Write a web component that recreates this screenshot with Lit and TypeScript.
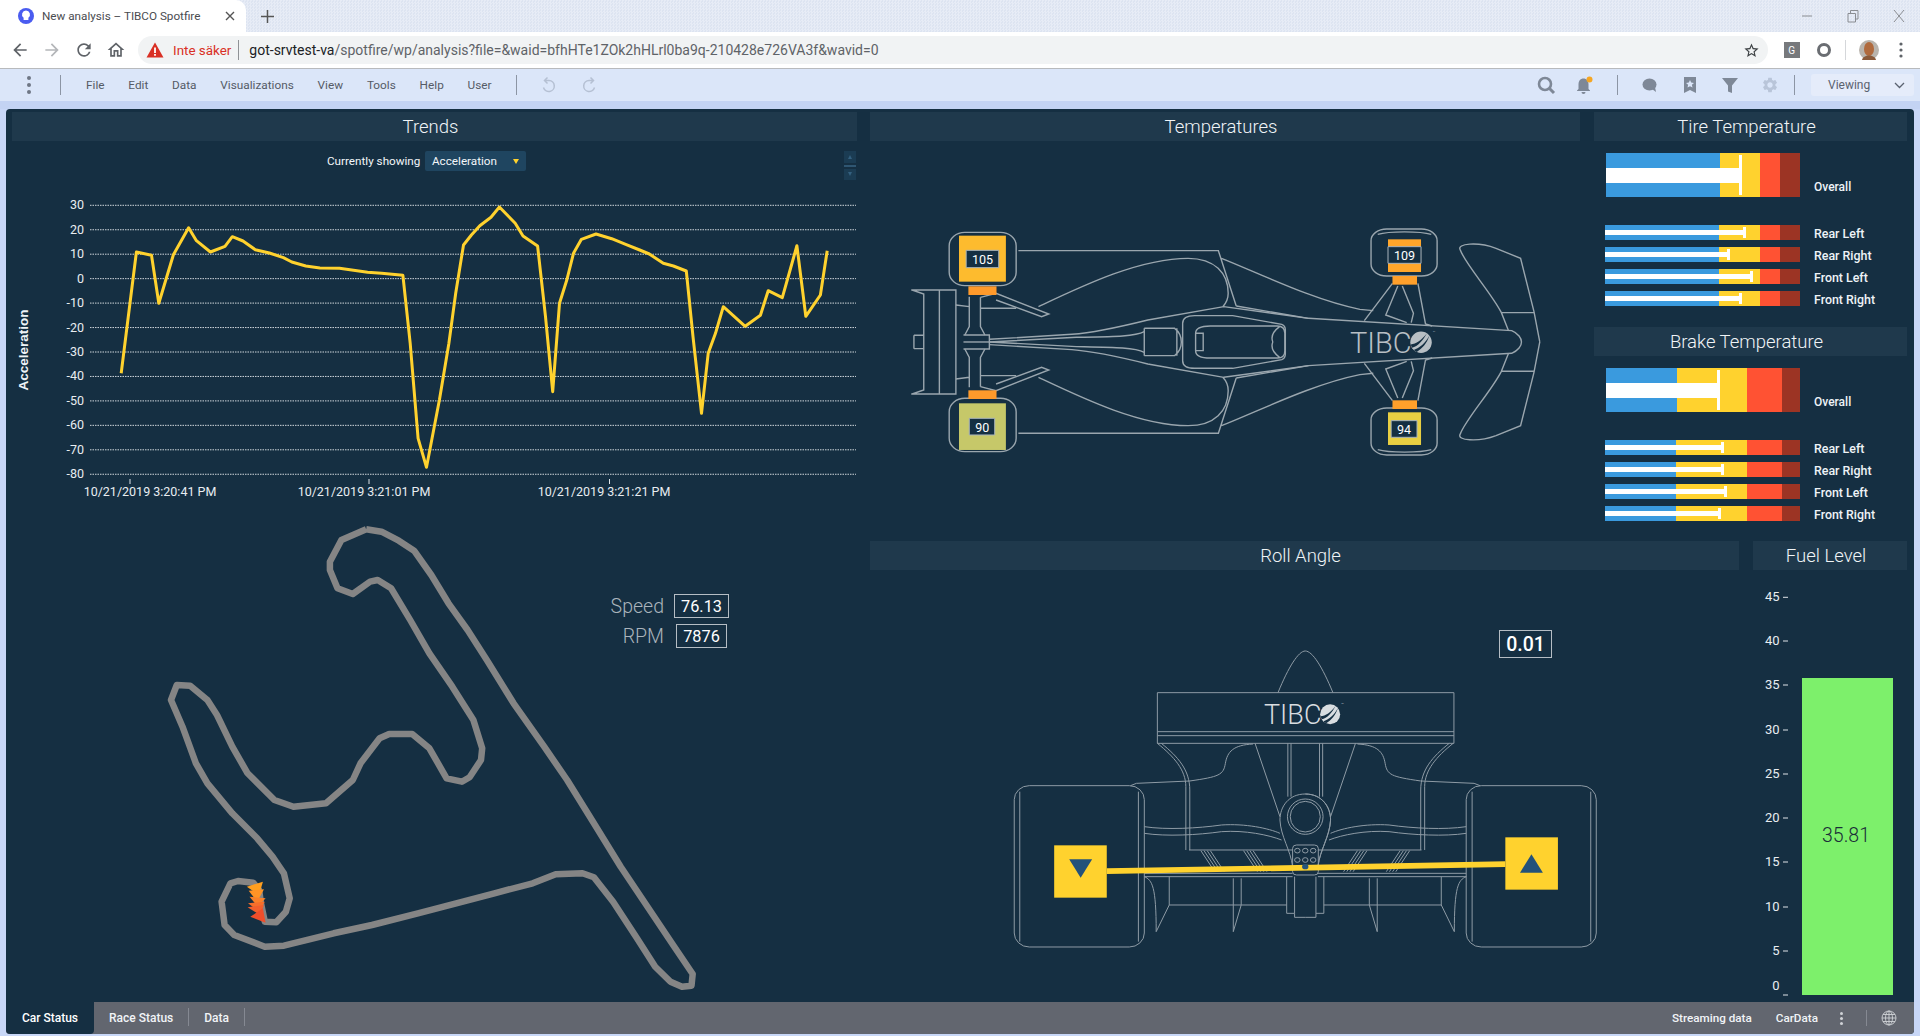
import { LitElement, html, css, svg } from "lit";
import { customElement } from "lit/decorators.js";

type Seg = [number, string];
const C = { blue: "#3a9ade", yellow: "#ffd22e", red: "#ff5233", dark: "#9c3424" };

const TICKS_Y = [30, 20, 10, 0, -10, -20, -30, -40, -50, -60, -70, -80];
const LINE_Z: [number, number][] = [[216,790],[243,426],[270,436],[283,580],[309,434],[336,353],[350,392],[375,426],[401,409],[414,380],[433,393],[455,419],[480,429],[505,443],[520,456],[545,468],[570,474],[605,475],[630,481],[655,487],[680,490],[718,496],[731,700],[745,985],[760,1072],[783,870],[800,700],[812,550],[826,405],[840,375],[855,347],[875,322],[890,291],[918,340],[932,378],[958,408],[972,620],[985,845],[997,580],[1010,510],[1022,430],[1036,388],[1062,372],[1090,386],[1115,403],[1140,420],[1157,432],[1182,460],[1200,468],[1223,483],[1235,680],[1250,910],[1262,730],[1275,670],[1289,590],[1328,649],[1355,616],[1369,542],[1394,563],[1408,480],[1420,407],[1436,619],[1462,555],[1474,422]];
const TRACK_Z: [number, number][] = [[565,28],[605,35],[650,62],[690,92],[735,165],[780,250],[830,330],[880,420],[950,550],[1030,680],[1090,780],[1160,910],[1230,1040],[1300,1160],[1370,1280],[1418,1362],[1415,1397],[1390,1400],[1360,1385],[1320,1340],[1270,1250],[1210,1145],[1160,1072],[1130,1060],[1060,1063],[1000,1090],[900,1120],[800,1150],[700,1180],[580,1215],[480,1240],[350,1277],[300,1280],[220,1245],[195,1215],[187,1145],[210,1090],[230,1083],[270,1088],[285,1110],[290,1150],[300,1205],[330,1207],[355,1175],[365,1135],[350,1060],[320,1010],[280,955],[215,880],[150,790],[120,730],[85,620],[55,540],[70,495],[105,497],[150,540],[175,585],[215,680],[255,760],[325,840],[375,860],[460,850],[530,780],[550,730],[600,655],[625,642],[685,642],[730,685],[775,775],[815,785],[835,772],[865,720],[868,685],[845,600],[790,500],[730,400],[680,300],[630,205],[595,180],[575,185],[530,222],[490,205],[470,150],[470,125],[500,60],[565,28]];

const pts = (a: [number, number][], ox: number, oy: number, sx: number, sy: number) =>
  a.map(([x, y]) => `${(ox + x / sx).toFixed(1)},${(oy + y / sy).toFixed(1)}`).join(" ");

const logo = (x: number, y: number, size: number, color: string, bg: string) => {
  const r = size * 0.37;
  const cx = x + size * 2.45;
  const cy = y - size * 0.36;
  return svg`
  <text x=${x} y=${y} class="tibco" style="font-size:${size}px" fill=${color}>TIBC</text>
  <text x=${cx + r + 1} y=${cy - r + 2} class="tibco" style="font-size:4px" fill=${color}>™</text>
  <g transform="translate(${cx},${cy}) scale(${r})">
    <circle r="1" fill=${color}></circle>
    <path d="M-0.96 0.2 C-0.45 0.15 0.05 -0.2 0.55 -0.84 C0.2 -0.2 -0.3 0.4 -0.85 0.5 Z" fill=${bg}></path>
    <path d="M-0.68 0.72 C-0.15 0.55 0.4 0.1 0.78 -0.62 C0.55 0.1 0.1 0.62 -0.4 0.9 Z" fill=${bg}></path>
  </g>`;
};

const topHalf = svg`
  <path d="M70,270 H170 V426 M72,270 L98,282 V426 M133,270 V426 M76,406 H98 M76,406 V426"></path>
  <rect x="155" y="97" width="150" height="160" rx="35" ry="40"></rect>
  <path d="M170,315 L200,320 M200,290 V380 L190,405 M225,292 V380 L235,405 M225,325 H305"></path>
  <path d="M187,405 H245 V426"></path>
  <path d="M245,418 L430,403 C480,398 540,380 600,360 L770,320 L960,355 L1415,392 C1430,400 1437,415 1437,426"></path>
  <path d="M245,426 L440,412 C520,410 570,410 592,395"></path>
  <path d="M592,385 H660 C670,395 675,410 675,426 M592,385 V426 M665,385 V426"></path>
  <path d="M678,426 V370 C678,352 690,347 705,347 H790 L900,373 C906,376 908,382 908,390 V426"></path>
  <path d="M707,426 V400 C707,386 720,378 740,378 H890 C902,378 907,385 907,400 V426 M707,400 H724 V426 M880,426 C875,410 880,395 895,380"></path>
  <path d="M355,320 C450,260 580,175 690,175 C750,175 780,220 780,280 C780,300 775,310 768,320"></path>
  <path d="M310,152 H758 L798,318 M765,175 C850,220 970,300 1075,328 L1105,332"></path>
  <path d="M798,318 L960,355"></path>
  <path d="M225,292 L260,280 L378,342 L362,350 L260,300"></path>
  <rect x="1100" y="87" width="148" height="141" rx="35" ry="35"></rect>
  <path d="M1115,103 C1140,93 1210,93 1235,103"></path>
  <path d="M1148,250 L1085,362 M1160,258 L1133,345 L1180,368 M1170,258 L1195,340 L1190,368 M1205,250 L1222,372 L1237,378"></path>
  <path d="M1300,150 C1290,130 1340,125 1380,145 L1435,175 L1465,335 L1478,426 M1300,150 C1310,190 1370,280 1392,338 L1408,392 M1392,338 H1465"></path>`;

const rearHalf = svg`
  <rect x="36" y="497" width="329" height="484" rx="38" ry="42"></rect>
  <path d="M50,515 V965 M350,515 V965"></path>
  <path d="M398,370 C440,410 470,450 470,500 V690 M408,370 C450,410 480,450 480,510 V690"></path>
  <path d="M640,372 C590,375 575,395 570,430 C565,465 555,470 480,483 L345,490 L330,497"></path>
  <path d="M645,370 L708,590 M728,370 V530 M736,370 V530"></path>
  <path d="M772,522 C730,522 708,560 708,600 C710,650 735,690 740,740"></path>
  <path d="M365,620 C420,630 500,625 560,615 C620,610 680,625 708,640 M365,640 C420,650 500,645 560,635 C620,630 680,645 712,660"></path>
  <path d="M478,690 H740 M365,760 H740 M365,770 H740"></path>
  <path d="M508,692 L543,755 M516,692 L551,755 M524,692 L559,755 M532,692 L567,755 M616,692 L651,755 M624,692 L659,755 M632,692 L667,755 M640,692 L675,755"></path>
  <path d="M365,770 C385,780 395,800 395,935 L428,855 V770 M590,775 V935 L610,855 V775 M428,855 H610 M610,855 H725"></path>
  <path d="M725,770 V880 H745 V892 H772 M745,770 V880"></path>`;

const carTemp = (x: number, y: number, w: number, h: number, fill: string, bx: number, by: number, bw: number, bh: number) => svg`
  <rect x=${x} y=${y} width=${w} height=${h} fill=${fill}></rect>
  <rect x=${bx} y=${by} width=${bw} height=${bh} fill="#152f42" stroke="#a9b5bd" vector-effect="non-scaling-stroke"></rect>`;

const TOP_LABELS: [number, number, string][] = [[229.5,177,"105"],[1175,165,"109"],[229,681,"90"],[1174,687,"94"]];

@customElement("bullet-row")
class BulletRow extends LitElement {
  static properties = { segs: { type: Array }, value: { type: Number }, big: { type: Boolean }, label: { type: String } };
  segs: Seg[] = []; value = 0; big = false; label = "";
  static styles = css`
    :host { display: grid; grid-template-columns: 195px 1fr; column-gap: 13px; font-family: Roboto, "Liberation Sans", sans-serif; }
    .bar { position: relative; display: flex; height: 15px; }
    .bar.big { height: 44px; margin-left: 1px; width: 194px; }
    .seg { height: 100%; }
    .fill { position: absolute; left: 0; top: 5px; height: 5px; background: #fff; }
    .mark { position: absolute; top: 2px; height: 11px; width: 3px; background: #fff; }
    .bar.big .fill { top: 15px; height: 15px; }
    .bar.big .mark { top: 2px; height: 40px; }
    .lab { font-size: 12.4px; font-weight: 500; color: #eef3f7; height: 15px; line-height: 18px; margin-left: 1px; white-space: nowrap; }
    .lab.big { height: auto; padding-top: 27px; line-height: 14px; font-size: 12px; }
  `;
  render() {
    return html`
      <div class="bar ${this.big ? "big" : ""}">
        ${this.segs.map(([w, c]) => html`<div class="seg" style="width:${w}px;background:${c}"></div>`)}
        <div class="fill" style="width:${this.value}px"></div>
        <div class="mark" style="left:${this.value}px"></div>
      </div>
      <div class="lab ${this.big ? "big" : ""}">${this.label}</div>`;
  }
}

@customElement("app-root")
class AppRoot extends LitElement {
  static styles = css`
    :host { display: block; width: 1920px; height: 1036px; background: #c8d7f7; overflow: hidden; font-family: Roboto, "Liberation Sans", sans-serif; }
    .tabstrip { height: 32px; background: repeating-conic-gradient(#e7ecf6 0 25%, #dde4f1 0 50%) 0 0 / 3px 3px; display: flex; align-items: center; position: relative; }
    .tab { width: 246px; height: 32px; background: #fff; border-radius: 0 10px 0 0; display: flex; align-items: center; box-sizing: border-box; padding-left: 18px; color: #4a4c50; font-size: 11.7px; flex: none; }
    .tab .fav { margin-right: 8px; flex: none; }
    .tab .t { flex: 1; white-space: nowrap; }
    .tab .x { margin-right: 11px; flex: none; }
    .plus { margin-left: 15px; }
    .win { margin-left: auto; display: flex; align-items: center; gap: 34px; padding-right: 15px; }
    .addr { height: 36px; background: #fff; display: flex; align-items: center; border-bottom: 1px solid #b8babd; position: relative; }
    .nav { display: flex; align-items: center; gap: 12px; padding-left: 10px; width: 138px; box-sizing: border-box; flex: none; }
    .omni { width: 1630px; height: 28px; background: #f1f3f4; border-radius: 14px; display: flex; align-items: center; flex: none; box-sizing: border-box; padding-left: 8px; padding-right: 8px; }
    .warn { margin-right: 9px; flex: none; }
    .insec { color: #d93025; font-size: 13.4px; white-space: nowrap; }
    .osep { width: 1px; height: 20px; background: #8f9296; margin: 0 10px 0 7px; }
    .url { color: #5f6368; white-space: nowrap; font-size: 14px; }
    .url b { font-weight: 400; color: #202124; }
    .star { margin-left: auto; display: flex; }
    .ext { display: flex; align-items: center; margin-left: 15.6px; }
    .g { width: 16px; height: 16px; background: #77797c; color: #fff; font-size: 10px; display: flex; align-items: center; justify-content: center; }
    .q { margin-left: 16px; }
    .esep { width: 1px; height: 20px; background: #d5d7da; margin-left: 13.5px; }
    .ava { margin-left: 13px; }
    .edots { margin-left: 20px; }

    .tools { height: 32px; background: #dbe6f9; display: flex; align-items: center; color: #555b66; font-size: 11.8px; position: relative; }
    .dots { width: 4px; margin-left: 27px; margin-right: 29px; display: flex; flex-direction: column; gap: 3px; }
    .dots i { width: 4px; height: 4px; background: #6e7785; border-radius: 50%; }
    .vsep { width: 1px; height: 20px; background: #8c95a4; flex: none; }
    .menu { display: flex; gap: 23.8px; margin-left: 25px; margin-right: 24px; }
    .undo { margin-left: 24px; }
    .redo { margin-left: 24px; }
    .right { margin-left: auto; display: flex; align-items: center; }
    .viewing { width: 103px; height: 22px; background: #e5ecfa; border-radius: 3px; display: flex; align-items: center; box-sizing: border-box; padding-left: 17px; margin-left: 16px; margin-right: 6px; font-size: 12px; color: #5a6270; }
    .viewing svg { margin-left: auto; margin-right: 9px; }
    .band { height: 8px; background: #c3d3f3; }

    .panel { margin: 0 6px; height: 925px; background: #152f42; border-radius: 4px; display: flex; flex-direction: column; overflow: hidden; }
    .main { flex: 1; min-height: 0; display: grid; grid-template-columns: 845px 1037px; column-gap: 13px; padding: 3px 7px 0 6px; }
    .col { display: flex; flex-direction: column; min-width: 0; }
    .title { height: 29px; box-sizing: border-box; padding-right: 8px; background: #1f394c; color: #f0f4f7; font-size: 18.5px; font-weight: 300; display: flex; align-items: center; justify-content: center; flex: none; }
    .chartcell { position: relative; height: 369px; }
    .chartcell svg, .trackcell svg, .car svg, .fuel svg { display: block; }
    .filter { position: absolute; left: 315px; top: 10px; display: flex; align-items: center; gap: 4px; color: #f3f6f9; font-size: 11.7px; }
    .filter .lbl { width: 94px; white-space: nowrap; }
    .dd { width: 101px; height: 20px; background: #1f4560; border-radius: 2px; display: flex; align-items: center; box-sizing: border-box; padding-left: 7px; position: relative; }
    .dd i { position: absolute; left: 88px; top: 8px; width: 0; height: 0; border-left: 3.5px solid transparent; border-right: 3.5px solid transparent; border-top: 5px solid #ffd22e; }
    .scroller { position: absolute; left: 832px; top: 10px; width: 12px; height: 29px; display: flex; flex-direction: column; gap: 2px; }
    .scroller .b { flex: 1; background: #1b3c53; display: flex; align-items: center; justify-content: center; }
    .scroller .m { height: 2px; background: #2f5672; flex: none; }
    .scroller .up { width: 0; height: 0; border-left: 2.5px solid transparent; border-right: 2.5px solid transparent; border-bottom: 4px solid #34607f; }
    .scroller .dn { width: 0; height: 0; border-left: 2.5px solid transparent; border-right: 2.5px solid transparent; border-top: 4px solid #34607f; }
    .trackcell { position: relative; height: 492px; }
    .readouts { position: absolute; left: 590px; top: 84px; display: grid; grid-template-columns: 62px auto; row-gap: 6px; column-gap: 10px; align-items: center; justify-items: center; }
    .rl { justify-self: end; color: #aab4bc; font-size: 19.5px; font-weight: 300; padding-top: 1px; }
    .rv { height: 24px; box-sizing: border-box; border: 1px solid #b5bdc4; color: #fff; font-size: 16.3px; display: flex; align-items: center; justify-content: center; }
    .rv.a { width: 55px; }
    .rv.b { width: 51px; }

    .toprow { display: grid; grid-template-columns: 710px 313px; column-gap: 14px; height: 429px; }
    .botrow { display: grid; grid-template-columns: 869px 154px; column-gap: 14px; height: 461px; }
    .side { display: flex; flex-direction: column; }
    .rows { display: flex; flex-direction: column; gap: 7px; margin-left: 11px; }
    .ov { margin: 12px 0 28px 11px; }
    .brake { margin-top: 21px; }
    .car { position: relative; }
    .rollval { position: absolute; left: 629px; top: 60px; width: 53px; height: 28px; box-sizing: border-box; border: 1px solid #b5bdc4; color: #fff; font-size: 19.5px; font-weight: 500; display: flex; align-items: center; justify-content: center; }

    .status { height: 32px; flex: none; background: #62666f; display: flex; align-items: stretch; font-size: 12px; font-weight: 500; color: #f1f4f7; }
    .stab { display: flex; align-items: center; padding: 0 16px 0 15px; white-space: nowrap; }
    .stab.on { width: 88px; box-sizing: border-box; padding: 0; background: #152f42; justify-content: center; border-radius: 0 0 4px 4px; color: #fff; }
    .stab.s { position: relative; }
    .stab.s::after { content: ""; position: absolute; right: 0; top: 6px; height: 18px; width: 1px; background: #858992; }
    .sright { margin-left: auto; display: flex; align-items: center; padding-right: 17px; white-space: nowrap; }
    .sright .txt { font-size: 11.7px; }
    .sdots { display: flex; flex-direction: column; gap: 2px; margin-left: 22px; margin-right: 23px; }
    .sdots i { width: 3px; height: 3px; border-radius: 50%; background: #cfd2d6; }
    .ssep { width: 1px; height: 16px; background: #858992; margin-right: 14px; }
    .sgap { margin-left: 24px; }

    .axis { font-family: Roboto, "Liberation Sans", sans-serif; font-size: 12.5px; fill: #e8edf1; }
    .faxis { font-family: Roboto, "Liberation Sans", sans-serif; font-size: 13px; fill: #e8edf1; }
    .ylab { font-family: "Liberation Sans", Arial, sans-serif; font-size: 13.5px; font-weight: 700; fill: #eef3f7; }
    .lines path, .lines rect, .lines ellipse, .lines circle { fill: none; vector-effect: non-scaling-stroke; stroke: #8e9ba5; stroke-width: 1; }
    .lines.heavy path, .lines.heavy rect { stroke: #9aa6ae; stroke-width: 1.4; }
    .tibco { font-family: Roboto, "Liberation Sans", sans-serif; font-weight: 300; }
    .tv { font-family: Roboto, "Liberation Sans", sans-serif; font-size: 12.5px; fill: #fff; text-anchor: middle; }
    .fuelv { font-family: Roboto, "Liberation Sans", sans-serif; font-size: 19.5px; font-weight: 300; fill: #1a2d38; text-anchor: middle; }
  `;

  private icon(path: string, size: number, color: string) {
    return html`<svg width=${size} height=${size} viewBox="0 0 24 24"><path d=${path} fill=${color}></path></svg>`;
  }

  private chromeBar() {
    return html`
      <div class="tabstrip">
        <div class="tab">
          <svg class="fav" width="16" height="18" viewBox="0 0 16 18"><circle cx="8" cy="9" r="8" fill="#4a5cf0"></circle><path d="M8 3.5a4 4 0 0 1 2.4 7.2V13H5.6v-2.3A4 4 0 0 1 8 3.5z" fill="#fff"></path></svg>
          <span class="t">New analysis – TIBCO Spotfire</span>
          <svg class="x" width="10" height="10" viewBox="0 0 10 10"><path d="M1 1l8 8M9 1l-8 8" stroke="#555" stroke-width="1.4"></path></svg>
        </div>
        <svg class="plus" width="13" height="13" viewBox="0 0 13 13"><path d="M6.5 0v13M0 6.5h13" stroke="#555" stroke-width="1.5"></path></svg>
        <div class="win">
          <svg width="12" height="12" viewBox="0 0 12 12"><path d="M1 6h10" stroke="#8a8d92"></path></svg>
          <svg width="12" height="14" viewBox="0 0 12 14"><path d="M1 4.5h7.5V13H1zM3.5 4.5V1.5H11V10H8.5" fill="none" stroke="#8a8d92"></path></svg>
          <svg width="12" height="14" viewBox="0 0 12 14"><path d="M1 1l10 12M11 1L1 13" stroke="#8a8d92"></path></svg>
        </div>
      </div>
      <div class="addr">
        <div class="nav">
          ${this.icon("M20 11H7.83l5.59-5.59L12 4l-8 8 8 8 1.41-1.41L7.83 13H20v-2z", 20, "#5f6368")}
          ${this.icon("M4 11h12.17l-5.59-5.59L12 4l8 8-8 8-1.41-1.41L16.17 13H4v-2z", 20, "#b4b6b9")}
          ${this.icon("M17.65 6.35A7.958 7.958 0 0012 4c-4.42 0-7.99 3.58-7.99 8s3.57 8 7.99 8c3.73 0 6.84-2.55 7.73-6h-2.08A5.99 5.99 0 0112 18c-3.31 0-6-2.69-6-6s2.69-6 6-6c1.66 0 3.14.69 4.22 1.78L13 11h7V4l-2.35 2.35z", 20, "#5f6368")}
          ${this.icon("M12 5.69l5 4.5V18h-2v-6H9v6H7v-7.81l5-4.5M12 3L2 12h3v8h6v-6h2v6h6v-8h3L12 3z", 20, "#5f6368")}
        </div>
        <div class="omni">
          <svg class="warn" width="18" height="16" viewBox="0 0 18 16"><path d="M9 0.5L17.5 15.5H0.5z" fill="#d93025"></path><path d="M8.1 5.5h1.8v5.5H8.1zM8.1 12h1.8v1.7H8.1z" fill="#fff"></path></svg>
          <span class="insec">Inte säker</span>
          <span class="osep"></span>
          <span class="url"><b>got-srvtest-va</b>/spotfire/wp/analysis?file=&amp;waid=bfhHTe1ZOk2hHLrl0ba9q-210428e726VA3f&amp;wavid=0</span>
          <span class="star">${this.icon("M22 9.24l-7.19-.62L12 2 9.19 8.63 2 9.24l5.46 4.73L5.82 21 12 17.27 18.18 21l-1.63-7.03L22 9.24zM12 15.4l-3.76 2.27 1-4.28-3.32-2.88 4.38-.38L12 6.1l1.71 4.04 4.38.38-3.32 2.88 1 4.28L12 15.4z", 17, "#3c4043")}</span>
        </div>
        <div class="ext">
          <div class="g">G</div>
          <svg class="q" width="16" height="16" viewBox="0 0 16 16"><circle cx="8" cy="8" r="5.5" fill="none" stroke="#6a6d72" stroke-width="3"></circle></svg>
          <span class="esep"></span>
          <svg class="ava" width="20" height="20" viewBox="0 0 20 20"><circle cx="10" cy="10" r="10" fill="#b9b4ad"></circle><ellipse cx="10" cy="9" rx="5" ry="7" fill="#b06a3d"></ellipse><path d="M3 20c1-6 13-6 14 0z" fill="#8a5a3a"></path></svg>
          <svg class="edots" width="4" height="16" viewBox="0 0 4 16"><circle cx="2" cy="2" r="1.6" fill="#5f6368"></circle><circle cx="2" cy="8" r="1.6" fill="#5f6368"></circle><circle cx="2" cy="14" r="1.6" fill="#5f6368"></circle></svg>
        </div>
      </div>`;
  }

  private toolBar() {
    const menu = ["File", "Edit", "Data", "Visualizations", "View", "Tools", "Help", "User"];
    const ic = "#7e8897";
    return html`
      <div class="tools">
        <div class="dots"><i></i><i></i><i></i></div>
        <span class="vsep"></span>
        <div class="menu">${menu.map((m) => html`<span>${m}</span>`)}</div>
        <span class="vsep"></span>
        <svg class="undo" width="16" height="18" viewBox="0 0 16 18"><path d="M6.5 1.5L3.5 4.5L6.5 7.5M3.5 4.5H8a5.5 5.5 0 1 1-5.5 7" fill="none" stroke="#b5c0d3" stroke-width="1.5"></path></svg>
        <svg class="redo" width="16" height="18" viewBox="0 0 16 18"><path d="M9.5 1.5L12.5 4.5L9.5 7.5M12.5 4.5H8a5.5 5.5 0 1 0 5.5 7" fill="none" stroke="#b5c0d3" stroke-width="1.5"></path></svg>
        <div class="right">
          <svg width="20" height="20" viewBox="0 0 20 20"><circle cx="9" cy="9" r="6" fill="none" stroke=${ic} stroke-width="2.6"></circle><path d="M13 13l5 5" stroke=${ic} stroke-width="3"></path></svg>
          <svg style="margin-left:19.4px" width="20" height="20" viewBox="0 0 20 20"><path d="M7.5 3.5C4.8 4 3.5 6.5 3.5 9v5l-1.5 1.5V16h13v-.5L13.5 14V9c0-2.5-1.3-5-4-5.5z" fill=${ic}></path><path d="M6.5 17h4a2 2 0 0 1-4 0z" fill=${ic}></path><circle cx="14.5" cy="4.5" r="3" fill="#f5a623"></circle></svg>
          <span class="vsep" style="margin-left:22px"></span>
          <svg style="margin-left:23px" width="18" height="18" viewBox="0 0 18 18"><ellipse cx="8.5" cy="8.5" rx="7" ry="6" fill=${ic}></ellipse><path d="M11 13l4 3-1-5z" fill=${ic}></path></svg>
          <svg style="margin-left:22.5px" width="16" height="18" viewBox="0 0 16 18"><path d="M2 1h12v16l-6-3-6 3z" fill=${ic}></path><path d="M8 4l1.2 2.6 2.8.3-2.1 1.9.6 2.8L8 10.2l-2.5 1.4.6-2.8L4 6.9l2.8-.3z" fill="#dbe6f9"></path></svg>
          <svg style="margin-left:23.5px" width="18" height="18" viewBox="0 0 18 18"><path d="M1 2h16l-6 7.5V17l-4-1.5V9.5z" fill=${ic}></path></svg>
          <svg style="margin-left:22px" width="18" height="18" viewBox="0 0 24 24"><path d="M19.14 12.94c.04-.3.06-.61.06-.94 0-.32-.02-.64-.07-.94l2.03-1.58a.49.49 0 00.12-.61l-1.92-3.32a.488.488 0 00-.59-.22l-2.39.96c-.5-.38-1.03-.7-1.62-.94l-.36-2.54a.484.484 0 00-.48-.41h-3.84c-.24 0-.43.17-.47.41l-.36 2.54c-.59.24-1.13.57-1.62.94l-2.39-.96c-.22-.08-.47 0-.59.22L2.74 8.87c-.12.21-.08.47.12.61l2.03 1.58c-.05.3-.09.63-.09.94s.02.64.07.94l-2.03 1.58a.49.49 0 00-.12.61l1.92 3.32c.12.22.37.29.59.22l2.39-.96c.5.38 1.03.7 1.62.94l.36 2.54c.05.24.24.41.48.41h3.84c.24 0 .44-.17.47-.41l.36-2.54c.59-.24 1.13-.56 1.62-.94l2.39.96c.22.08.47 0 .59-.22l1.92-3.32c.12-.22.07-.47-.12-.61l-2.01-1.58zM12 15.6c-1.98 0-3.6-1.62-3.6-3.6s1.62-3.6 3.6-3.6 3.6 1.62 3.6 3.6-1.62 3.6-3.6 3.6z" fill="#b9c5d9"></path></svg>
          <span class="vsep" style="margin-left:14.6px"></span>
          <div class="viewing">Viewing<svg width="11" height="7" viewBox="0 0 11 7"><path d="M1 1l4.5 4.5L10 1" fill="none" stroke="#5a6270" stroke-width="1.3"></path></svg></div>
        </div>
      </div>`;
  }

  private trends() {
    const gy = (i: number) => 205.3 + i * 24.45;
    const xl: [number, number, string][] = [[130, 150, "10/21/2019 3:20:41 PM"], [369, 364, "10/21/2019 3:21:01 PM"], [609.5, 604, "10/21/2019 3:21:21 PM"]];
    return html`
      <div class="chartcell">
        <svg width="845" height="369" viewBox="12 141 845 369">
          ${TICKS_Y.map((t, i) => svg`
            <line x1="90" x2="856" y1=${gy(i)} y2=${gy(i)} stroke="#cfd6db" stroke-width="1" stroke-dasharray="1.5 1"></line>
            <text class="axis" x="84" y=${gy(i) + 4} text-anchor="end">${t}</text>`)}
          ${xl.map(([t, c, l]) => svg`
            <line x1=${t} x2=${t} y1="479" y2="484" stroke="#dfe4e8"></line>
            <text class="axis" x=${c} y="496" text-anchor="middle">${l}</text>`)}
          <text class="ylab" transform="translate(28,350) rotate(-90)" text-anchor="middle">Acceleration</text>
          <polyline points=${pts(LINE_Z, 0, 110, 1.782, 3)} fill="none" stroke="#ffd22e" stroke-width="3" stroke-linejoin="round"></polyline>
        </svg>
        <div class="filter"><span class="lbl">Currently showing</span><div class="dd">Acceleration<i></i></div></div>
        <div class="scroller"><div class="b"><span class="up"></span></div><div class="m"></div><div class="b"><span class="dn"></span></div></div>
      </div>`;
  }

  private track() {
    const z = (x: number, y: number) => `${(150 + x / 2.613).toFixed(1)},${(520 + y / 3).toFixed(1)}`;
    const tris: [number, number, number, number, number, number, string][] = [
      [253,1100,295,1085,285,1125,"#ff9f1f"],
      [258,1112,298,1108,280,1145,"#ff9326"],
      [260,1130,302,1135,282,1160,"#f9802a"],
      [256,1150,300,1145,285,1175,"#f56e2b"],
      [255,1162,298,1155,288,1185,"#f25f2c"],
      [262,1190,295,1165,302,1208,"#ef4e2b"],
    ];
    return html`
      <div class="trackcell">
        <svg width="845" height="492" viewBox="12 510 845 492">
          <polyline points=${pts(TRACK_Z, 150, 520, 2.613, 3)} fill="none" stroke="#858585" stroke-width="6.5" stroke-linejoin="round"></polyline>
          ${tris.map((t) => svg`<polygon points="${z(t[0], t[1])} ${z(t[2], t[3])} ${z(t[4], t[5])}" fill=${t[6]}></polygon>`)}
        </svg>
        <div class="readouts">
          <span class="rl">Speed</span><div class="rv a">76.13</div>
          <span class="rl">RPM</span><div class="rv b">7876</div>
        </div>
      </div>`;
  }

  private temperatures() {
    return html`
      <div class="car">
        <svg width="710" height="400" viewBox="870 141 710 400">
          <g transform="translate(880,200) scale(0.4464,0.3333)">
            <g class="lines heavy">
              ${topHalf}
              <g transform="translate(0,852) scale(1,-1)">${topHalf}</g>
              <path d="M187,426 H245"></path>
            </g>
            <rect x="198" y="259" width="63" height="26" fill="#ff9a2b"></rect>
            <rect x="198" y="571" width="63" height="26" fill="#ff9a2b"></rect>
            <rect x="1148" y="228" width="55" height="26" fill="#ffa02b"></rect>
            <rect x="1148" y="601" width="55" height="26" fill="#ffa02b"></rect>
            ${carTemp(177,107,105,138,"#fdbb2e",193,151,73,52)}
            ${carTemp(1138,118,74,98,"#ffa62b",1138,140,74,50)}
            ${carTemp(177,610,105,140,"#c6c869",200,655,57,50)}
            ${carTemp(1138,637,74,98,"#e8cf42",1145,662,58,50)}
          </g>
          ${TOP_LABELS.map(([x, y, l]) => svg`<text class="tv" x=${880 + x / 2.24} y=${200 + y / 3 + 4.5}>${l}</text>`)}
          ${logo(1350, 352.7, 29, "#b8bfc4", "#152f42")}
        </svg>
      </div>`;
  }

  private sections() {
    const tire: Seg[] = [[114, C.blue], [40, C.yellow], [20, C.red], [20, C.dark]];
    const tireS: Seg[] = [[114, C.blue], [41, C.yellow], [20, C.red], [20, C.dark]];
    const brake: Seg[] = [[71, C.blue], [70, C.yellow], [35, C.red], [18, C.dark]];
    const brakeS: Seg[] = [[71, C.blue], [71, C.yellow], [35, C.red], [18, C.dark]];
    const mk = (s: Seg[], vals: number[]) => ["Rear Left", "Rear Right", "Front Left", "Front Right"].map(
      (l, i) => html`<bullet-row .segs=${s} .value=${vals[i]} .label=${l}></bullet-row>`);
    return html`
      <div class="side">
        <div class="title">Tire Temperature</div>
        <bullet-row class="ov" .segs=${tire} .value=${133} .big=${true} .label=${"Overall"}></bullet-row>
        <div class="rows">${mk(tireS, [138, 122, 145, 134])}</div>
        <div class="title brake">Brake Temperature</div>
        <bullet-row class="ov" .segs=${brake} .value=${111} .big=${true} .label=${"Overall"}></bullet-row>
        <div class="rows">${mk(brakeS, [116, 116, 119, 113])}</div>
      </div>`;
  }

  private roll() {
    return html`
      <div class="car">
        <svg width="869" height="432" viewBox="870 570 869 432">
          <g transform="translate(1000,620) scale(0.39541,0.33333)">
            <g class="lines">
              ${rearHalf}
              <g transform="translate(1544,0) scale(-1,1)">${rearHalf}</g>
              <path d="M703,218 C730,140 755,93 772,93 C790,93 815,140 842,218"></path>
              <rect x="398" y="218" width="750" height="152"></rect>
              <path d="M398,335 H1148 M398,347 H1148"></path>
              <path d="M772,522 C814,522 836,560 836,600 C834,650 809,690 804,740"></path>
              <ellipse cx="772" cy="590" rx="45" ry="53"></ellipse>
              <ellipse cx="772" cy="590" rx="38" ry="46"></ellipse>
              <rect x="740" y="675" width="65" height="90" rx="10" ry="10"></rect>
              ${[692, 720].map((y) => [752, 772, 792].map((x) => svg`<circle cx=${x} cy=${y} r="7"></circle>`))}
            </g>
            <polygon points="270,745 1278,724 1278,741 270,762" fill="#ffd22e"></polygon>
            <circle cx="772" cy="740" r="8" fill="#27557a"></circle>
            <rect x="137" y="676" width="133" height="157" fill="#ffd22e"></rect>
            <rect x="1278" y="652" width="133" height="157" fill="#ffd22e"></rect>
            <polygon points="175,718 233,718 204,773" fill="#23527a"></polygon>
            <polygon points="1344,703 1373,758 1315,758" fill="#23527a"></polygon>
          </g>
          ${logo(1264, 724, 27, "#d9dde0", "#152f42")}
        </svg>
        <div class="rollval">0.01</div>
      </div>`;
  }

  private fuel() {
    const ys = [597.3, 641, 685, 730, 774, 818, 862, 907, 951, 995];
    const vals = [45, 40, 35, 30, 25, 20, 15, 10, 5, 0];
    return html`
      <div class="fuel">
        <svg width="154" height="432" viewBox="1753 570 154 432">
          ${ys.map((y, i) => svg`
            <text class="faxis" x="1779.5" y=${(i === 9 ? 985.7 : y - 1) + 4.5} text-anchor="end">${vals[i]}</text>
            <line x1="1783" x2="1788" y1=${y} y2=${y} stroke="#dfe4e8"></line>`)}
          <rect x="1802" y="678" width="91" height="317" fill="#7df06b"></rect>
          <text class="fuelv" x="1846" y="841.5">35.81</text>
        </svg>
      </div>`;
  }

  render() {
    return html`
      ${this.chromeBar()}
      ${this.toolBar()}
      <div class="band"></div>
      <div class="panel">
        <div class="main">
          <div class="col">
            <div class="title">Trends</div>
            ${this.trends()}
            ${this.track()}
          </div>
          <div class="col">
            <div class="toprow">
              <div class="col"><div class="title">Temperatures</div>${this.temperatures()}</div>
              ${this.sections()}
            </div>
            <div class="botrow">
              <div class="col"><div class="title">Roll Angle</div>${this.roll()}</div>
              <div class="col"><div class="title">Fuel Level</div>${this.fuel()}</div>
            </div>
          </div>
        </div>
        <div class="status">
          <div class="stab on">Car Status</div>
          <div class="stab s">Race Status</div>
          <div class="stab s">Data</div>
          <div class="sright">
            <span class="txt">Streaming data</span>
            <span class="sgap txt">CarData</span>
            <div class="sdots"><i></i><i></i><i></i></div>
            <span class="ssep"></span>
            <svg width="16" height="16" viewBox="0 0 16 16"><g fill="none" stroke="#cfd2d6" stroke-width="0.9"><circle cx="8" cy="8" r="7"></circle><ellipse cx="8" cy="8" rx="3.5" ry="7"></ellipse><path d="M1 8h14M2 4.5h12M2 11.5h12M8 1v14"></path></g></svg>
          </div>
        </div>
      </div>`;
  }
}
